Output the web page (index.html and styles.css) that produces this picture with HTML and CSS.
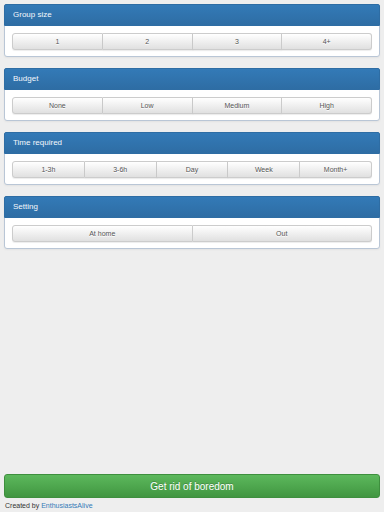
FILE: index.html
```html
<!DOCTYPE html>
<html lang="en">
  <head>
    <meta charset="UTF-8" />
    <title>Boredom</title>
    <link rel="stylesheet" href="styles.css">
  </head>
  <body>
    <div class="page">
      <div class="panel">
        <div class="panel-heading">Group size</div>
        <div class="panel-body">
          <div class="btn-group">
            <button class="btn">1</button>
            <button class="btn">2</button>
            <button class="btn">3</button>
            <button class="btn">4+</button>
          </div>
        </div>
      </div>

      <div class="panel">
        <div class="panel-heading">Budget</div>
        <div class="panel-body">
          <div class="btn-group">
            <button class="btn">None</button>
            <button class="btn">Low</button>
            <button class="btn">Medium</button>
            <button class="btn">High</button>
          </div>
        </div>
      </div>

      <div class="panel">
        <div class="panel-heading">Time required</div>
        <div class="panel-body">
          <div class="btn-group">
            <button class="btn">1-3h</button>
            <button class="btn">3-6h</button>
            <button class="btn">Day</button>
            <button class="btn">Week</button>
            <button class="btn">Month+</button>
          </div>
        </div>
      </div>

      <div class="panel">
        <div class="panel-heading">Setting</div>
        <div class="panel-body">
          <div class="btn-group">
            <button class="btn">At home</button>
            <button class="btn">Out</button>
          </div>
        </div>
      </div>

      <div class="footer">
        <button class="btn-go">Get rid of boredom</button>
        <div class="credits">Created by <a href="#">EnthusiastsAlive</a></div>
      </div>
    </div>
  </body>
</html>
```

FILE: styles.css
```css
html,
body {
  margin: 0;
  padding: 0;
  height: 100%;
}
body {
  font-family: "Liberation Sans", Arial, sans-serif;
  background-color: #eeeeee;
  color: #333;
}
.page {
  box-sizing: border-box;
  min-height: 100%;
  padding: 4px 4px 0 4px;
  display: flex;
  flex-direction: column;
}
.panel {
  background-color: #fff;
  border: 1px solid #b9c6d6;
  border-radius: 3px;
  margin-bottom: 11px;
  box-shadow: 0 1px 2px rgba(0, 0, 0, 0.05);
}
.panel-heading {
  height: 20px;
  line-height: 20px;
  padding: 0 8px;
  font-size: 8px;
  color: #f4f8fc;
  background-image: linear-gradient(to bottom, #337ab7 0, #2e6da4 100%);
  border: 1px solid #2e6da4;
  border-radius: 2px 2px 0 0;
  margin: -1px -1px 0 -1px;
}
.panel-body {
  padding: 7px 7px 6px 7px;
}
.btn-group {
  display: flex;
}
.btn {
  flex: 1;
  height: 17px;
  padding: 0;
  font-family: inherit;
  font-size: 7px;
  color: #555;
  background-image: linear-gradient(to bottom, #fff 0, #e0e0e0 100%);
  border: 1px solid #ccc;
  border-left-width: 0;
  box-shadow: inset 0 1px 0 rgba(255, 255, 255, 0.15), 0 1px 1px rgba(0, 0, 0, 0.075);
  text-shadow: 0 1px 0 #fff;
  cursor: pointer;
}
.btn:first-child {
  border-left-width: 1px;
  border-radius: 3px 0 0 3px;
}
.btn:last-child {
  border-radius: 0 3px 3px 0;
}
.footer {
  margin-top: auto;
}
.btn-go {
  display: block;
  width: 100%;
  height: 24px;
  font-family: inherit;
  font-size: 10px;
  color: #fff;
  background-image: linear-gradient(to bottom, #5cb85c 0, #419641 100%);
  border: 1px solid #3e8f3e;
  border-radius: 3px;
  text-shadow: 0 -1px 0 rgba(0, 0, 0, 0.2);
  cursor: pointer;
}
.credits {
  font-size: 7px;
  padding: 3px 1px 2px 1px;
  line-height: 9px;
}
.credits a {
  color: #337ab7;
  text-decoration: none;
}
```
